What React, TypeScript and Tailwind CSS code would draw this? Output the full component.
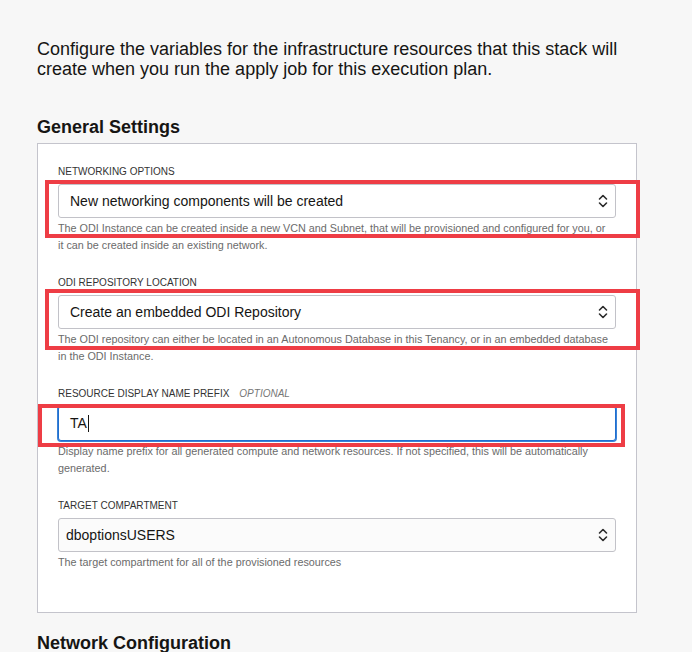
import React from "react";

const Chevrons = () => (
  <svg width="10" height="14" viewBox="0 0 10 14" fill="none" stroke="#2b2b2b" strokeWidth="1.6" strokeLinecap="round" strokeLinejoin="round">
    <path d="M1.5 5 L5 1.5 L8.5 5" />
    <path d="M1.5 9 L5 12.5 L8.5 9" />
  </svg>
);

const Field = ({ label, optional, help, children }) => (
  <div className="mb-[24px]">
    <div className="mb-[6px] flex items-baseline text-[10px] leading-[12px] text-[#333]">
      <span>{label}</span>
      {optional && <span className="ml-[10px] italic text-[#777]">OPTIONAL</span>}
    </div>
    {children}
    <p className="mt-[2px] pr-[5px] text-[10.8px] leading-[16.5px] text-[#6b6b6b]">{help}</p>
  </div>
);

const Select = ({ value, padLeft = "pl-[11px]", bg = "bg-white" }) => (
  <div className={`flex h-[34px] items-center justify-between rounded-[3px] border border-[#c2c2c8] ${bg} ${padLeft} pr-[7px]`}>
    <span className="text-[14px] text-[#161513]">{value}</span>
    <Chevrons />
  </div>
);

export default function App() {
  return (
    <div className="relative min-h-[652px] bg-[#f7f7f7] pl-[37px] pt-[39px] font-['Liberation_Sans',Arial,sans-serif] text-[#161513]">
      <p className="w-[600px] text-[18px] leading-[20px]">
        Configure the variables for the infrastructure resources that this stack will create when you run the apply job for this execution plan.
      </p>

      <h2 className="mt-[38px] mb-[5px] text-[18px] font-bold leading-[21px]">General Settings</h2>

      <div className="w-[600px] border border-[#c4c4cc] bg-white px-[20px] pt-[22px] pb-[17px]">
        <Field
          label="NETWORKING OPTIONS"
          help="The ODI Instance can be created inside a new VCN and Subnet, that will be provisioned and configured for you, or it can be created inside an existing network."
        >
          <Select value="New networking components will be created" />
        </Field>

        <Field
          label="ODI REPOSITORY LOCATION"
          help="The ODI repository can either be located in an Autonomous Database in this Tenancy, or in an embedded database in the ODI Instance."
        >
          <Select value="Create an embedded ODI Repository" />
        </Field>

        <Field
          label="RESOURCE DISPLAY NAME PREFIX"
          optional
          help="Display name prefix for all generated compute and network resources. If not specified, this will be automatically generated."
        >
          <div className="mt-[3px] flex h-[35px] items-center rounded-[3px] border border-[#1f6fd0] bg-white pl-[11px] ring-1 ring-[#3b82d6]">
            <span className="text-[14px] text-[#161513]">TA</span>
            <span className="ml-[1px] h-[17px] w-[1px] bg-[#161513]" />
          </div>
        </Field>

        <Field label="TARGET COMPARTMENT" help="The target compartment for all of the provisioned resources">
          <Select value="dboptionsUSERS" padLeft="pl-[7px]" bg="bg-[#fbfbfb]" />
        </Field>
      </div>

      <h2 className="mt-[20px] text-[18px] font-bold leading-[21px]">Network Configuration</h2>

      {/* annotation boxes */}
      <div className="pointer-events-none absolute left-[45px] top-[180px] h-[58px] w-[595px] border-4 border-[#ee3d45]" />
      <div className="pointer-events-none absolute left-[45px] top-[289px] h-[61px] w-[595px] border-4 border-[#ee3d45]" />
      <div className="pointer-events-none absolute left-[38px] top-[404px] h-[43px] w-[587px] border-4 border-[#ee3d45]" />
    </div>
  );
}
